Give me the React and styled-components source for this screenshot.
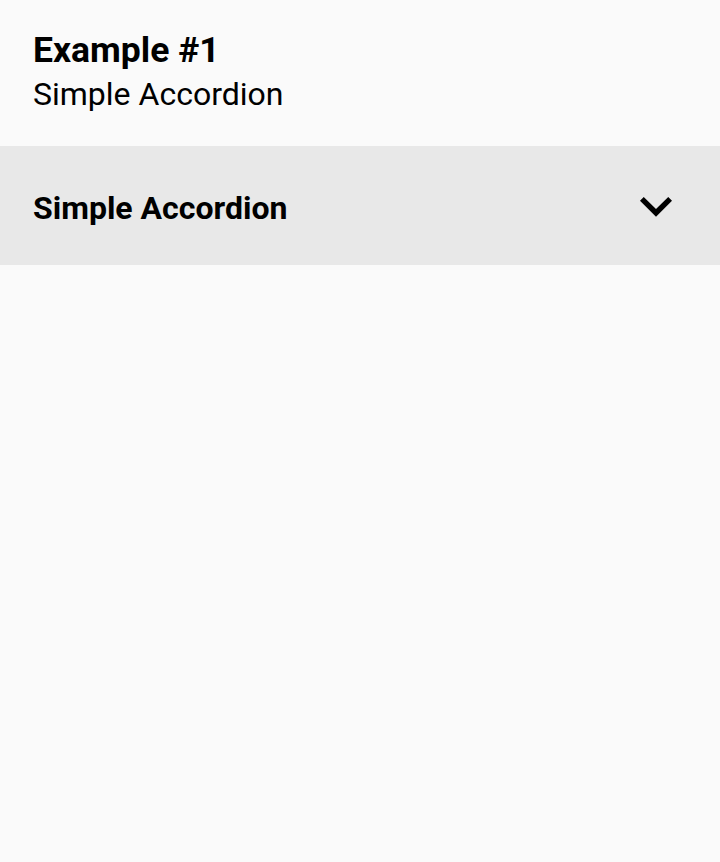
import React from "react";
import styled, { createGlobalStyle } from "styled-components";

const Global = createGlobalStyle`
  html, body { margin: 0; padding: 0; background: #fafafa; }
  body { font-family: Roboto, "Liberation Sans", sans-serif; color: #000; }
`;

const Page = styled.div`
  width: 720px;
  min-height: 862px;
  background: #fafafa;
  display: flex;
  flex-direction: column;
`;

const Header = styled.header`
  height: 146px;
  box-sizing: border-box;
  padding: 29px 33px 0;
  display: flex;
  flex-direction: column;
`;

const Title = styled.h1`
  margin: 0;
  font-size: 35.5px;
  font-weight: 700;
  line-height: 42px;
`;

const Subtitle = styled.div`
  font-size: 32px;
  font-weight: 400;
  line-height: 46px;
`;

const AccordionHeader = styled.button`
  all: unset;
  box-sizing: border-box;
  height: 119px;
  width: 100%;
  background: #e8e8e8;
  display: flex;
  align-items: center;
  justify-content: space-between;
  padding: 0 32px 0 33px;
  cursor: pointer;
`;

const AccordionTitle = styled.span`
  font-family: Roboto, "Liberation Sans", sans-serif;
  font-size: 32px;
  font-weight: 700;
  color: #000;
  padding-top: 4px;
`;

const Chevron = () => (
  <svg width="64" height="64" viewBox="0 0 24 24" aria-hidden="true">
    <path d="M16.59 8.59L12 13.17 7.41 8.59 6 10l6 6 6-6z" fill="#000" />
  </svg>
);

export default function App() {
  return (
    <Page>
      <Global />
      <Header>
        <Title>Example #1</Title>
        <Subtitle>Simple Accordion</Subtitle>
      </Header>
      <AccordionHeader>
        <AccordionTitle>Simple Accordion</AccordionTitle>
        <Chevron />
      </AccordionHeader>
    </Page>
  );
}
